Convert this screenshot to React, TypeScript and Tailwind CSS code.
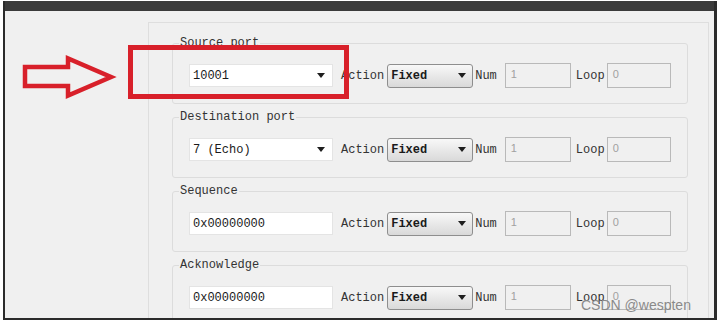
import React from 'react';

const mono = { fontFamily: '"Liberation Mono", "DejaVu Sans Mono", monospace' };

const groups = [
    { label: 'Source port', value: '10001', combo: true },
    { label: 'Destination port', value: '7 (Echo)', combo: true },
    { label: 'Sequence', value: '0x00000000', combo: false },
    { label: 'Acknowledge', value: '0x00000000', combo: false },
];

function Caret() {
    return (
        <svg width="8" height="5" viewBox="0 0 8 5" className="shrink-0">
            <path d="M0 0 L8 0 L4 5 Z" fill="#1e1e1e" />
        </svg>
    );
}

function FieldRow({ value, combo }: { value: string; combo: boolean }) {
    return (
        <div className="flex items-center pl-[16px] mt-[13px] text-[12px] leading-[14px] text-[#333]">
            <div className="w-[144px] h-[23px] bg-white border border-[#e4e4e4] flex items-center pl-[3px] pr-[7px] text-[#1a1a1a]">
                <span className="flex-1">{value}</span>
                {combo && <Caret />}
            </div>
            <span className="ml-[8px]">Action</span>
            <div className="ml-[3px] w-[86px] h-[24px] rounded-[3px] border border-[#8e8e8e] bg-gradient-to-b from-[#f8f8f8] to-[#d9d9d9] flex items-center pl-[3px] pr-[6px] text-[#1a1a1a] font-bold">
                <span className="flex-1">Fixed</span>
                <Caret />
            </div>
            <span className="ml-[2px]">Num</span>
            <div className="ml-[8px] w-[66px] h-[25px] border border-[#b9b9b9] bg-[#f0f0f0] pl-[5px] pt-[3px] text-[11px] text-[#a0a0a0]" style={{ fontFamily: '"Liberation Sans", Arial, sans-serif' }}>1</div>
            <span className="ml-[5px]">Loop</span>
            <div className="ml-[2px] w-[64px] h-[25px] border border-[#b9b9b9] bg-[#f0f0f0] pl-[5px] pt-[3px] text-[11px] text-[#a0a0a0]" style={{ fontFamily: '"Liberation Sans", Arial, sans-serif' }}>0</div>
        </div>
    );
}

export default function App() {
    return (
        <div className="relative w-[719px] h-[323px] bg-white overflow-hidden" style={mono}>
            <div className="ml-[3px] mt-[1px] w-[714px] h-[319px] border-l-2 border-r-[3px] border-b-2 border-[#2b2b2b] flex flex-col">
                <div className="h-[10px] bg-[#3b3b3b] shrink-0"></div>
                <div className="flex-1 flex bg-[#f0f0f0] overflow-hidden">
                    <div className="w-[143px] shrink-0"></div>
                    <div className="mt-[11px] w-[561px] border-l border-t border-r border-[#dedede] pt-[13px] pl-[23px] flex flex-col gap-[6px]">
                        {groups.map((g) => (
                            <fieldset key={g.label} className="w-[516px] h-[68px] shrink-0 border border-[#dcdcdc] rounded-[3px]">
                                <legend className="ml-[6px] px-[1px] text-[12px] leading-[14px] text-[#333]">{g.label}</legend>
                                <FieldRow value={g.value} combo={g.combo} />
                            </fieldset>
                        ))}
                    </div>
                </div>
            </div>

            {/* annotation */}
            <svg className="absolute left-0 top-0" width="140" height="110" viewBox="0 0 140 110">
                <polygon points="25,67 68,67 68,58.5 111,77 68,95.5 68,86 25,86" fill="none" stroke="#d8202a" strokeWidth="4.5" strokeLinejoin="miter" />
            </svg>
            <div className="absolute left-[128px] top-[45px] w-[221px] h-[54px] border-[5px] border-[#d8202a]"></div>

            <div className="absolute left-[581px] top-[297px] text-[14px] leading-[16px] text-[#8a8a8a]" style={{ fontFamily: '"Liberation Sans", Arial, sans-serif' }}>CSDN @wespten</div>
        </div>
    );
}
